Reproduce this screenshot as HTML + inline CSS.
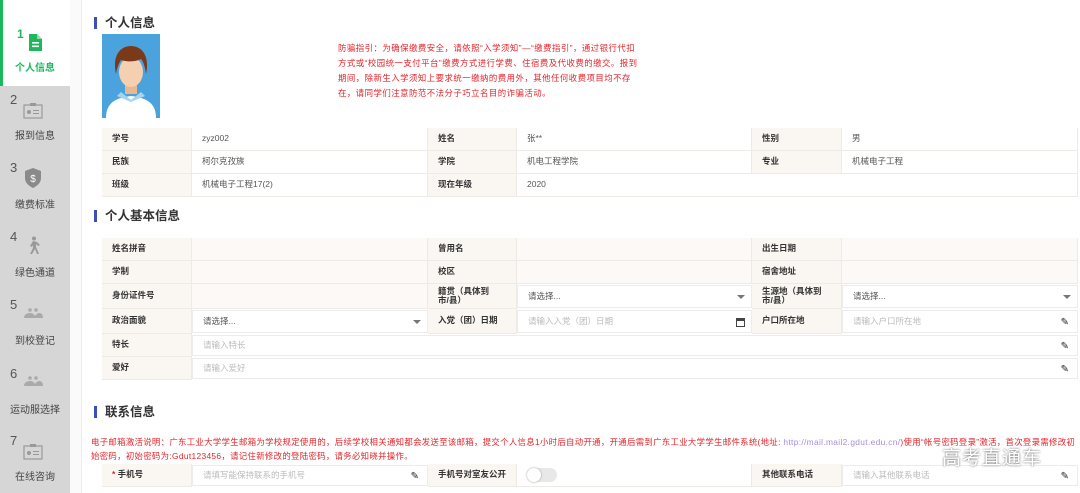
<!DOCTYPE html>
<html><head><meta charset="utf-8">
<style>
*{margin:0;padding:0;box-sizing:border-box}
body{width:1080px;height:493px;overflow:hidden;background:#fff;position:relative;font-family:"Liberation Sans","Noto Sans CJK SC",sans-serif;color:#333}
.a{position:absolute}
.side{left:0;top:0;width:70px;height:493px;background:#d6d6d6}
.act{left:0;top:0;width:70px;height:86px;background:#fff;border-left:3px solid #1db85c}
.num{font-size:13px;color:#555}
.sl{font-size:10px;color:#444;width:70px;text-align:center}
.h{font-size:12.5px;font-weight:bold;color:#333;padding-left:8px;border-left:3px solid #3b4fb5;line-height:12px}
.c{position:absolute;font-size:8.5px;line-height:1.1;display:flex;align-items:center;padding-left:10px;border-bottom:1px solid #eeeae5;border-right:1px solid #eeeae5}
.l{background:#faf6f2;color:#333;font-weight:bold}
.w{padding-right:18px}
.v{background:#fff;color:#555}
.e{background:#fcf9f6}
.in{background:#fff;color:#bbb;border:1px solid #ececec}
.sel{color:#555}
.ar{position:absolute;right:6px;top:50%;margin-top:-2px;width:0;height:0;border-left:4px solid transparent;border-right:4px solid transparent;border-top:4px solid #777}
.pen{position:absolute;right:8px;top:50%;margin-top:-5px;font-size:10px;color:#222}
.red{color:#e5242b}
</style></head><body>
<div class="a side"></div>
<div class="a act"></div>
<div class="a" style="left:70px;top:0;width:12px;height:493px;background:#fafafa;border-right:1px solid #eee"></div>
<div class="a num" style="left:17px;top:27px;color:#1db85c;font-weight:bold;font-size:12px">1</div>
<svg class="a" style="left:28px;top:34px" width="14" height="17" viewBox="0 0 14 17"><path d="M1 0h8l5 5v12H1z" fill="#1db85c"/><path d="M9 0v5h5" fill="#8fdcae"/><rect x="4" y="8" width="7" height="1.6" fill="#fff"/><rect x="4" y="11.5" width="7" height="1.6" fill="#fff"/></svg>
<div class="a sl" style="top:59px;color:#1db85c;font-weight:bold">个人信息</div>

<div class="a num" style="left:10px;top:92px">2</div>
<svg class="a" style="left:23px;top:102px" width="20" height="17" viewBox="0 0 20 17"><rect x="1" y="3" width="18" height="13" fill="none" stroke="#999" stroke-width="1.2"/><rect x="7" y="1" width="6" height="3" fill="#999"/><circle cx="6" cy="10" r="2" fill="#999"/><rect x="10" y="8" width="6" height="1" fill="#999"/><rect x="10" y="11" width="6" height="1" fill="#999"/></svg>
<div class="a sl" style="top:127px">报到信息</div>

<div class="a num" style="left:10px;top:160px">3</div>
<svg class="a" style="left:24px;top:168px" width="18" height="20" viewBox="0 0 18 20"><path d="M9 0L17 3v7c0 5-4 8-8 10C5 18 1 15 1 10V3z" fill="#8a8a8a"/><text x="9" y="14" font-size="10" fill="#fff" text-anchor="middle" font-family="Liberation Sans">$</text></svg>
<div class="a sl" style="top:196px">缴费标准</div>

<div class="a num" style="left:10px;top:229px">4</div>
<svg class="a" style="left:26px;top:236px" width="14" height="18" viewBox="0 0 14 18"><circle cx="8" cy="2.5" r="2" fill="#999"/><path d="M7 5l-3 5 2 1 1-2v3l-3 6h2l3-5 2 5h2l-3-7V8l2 2 2-1-3-3z" fill="#999"/></svg>
<div class="a sl" style="top:264px">绿色通道</div>

<div class="a num" style="left:10px;top:297px">5</div>
<svg class="a" style="left:23px;top:308px" width="20" height="10" viewBox="0 0 20 10"><circle cx="7" cy="2" r="1.8" fill="#aaa"/><circle cx="13" cy="2" r="1.8" fill="#aaa"/><path d="M1 10c0-4 4-5 6-5s4 1 5 3c1-2 3-3 4-3 2 0 4 1 4 5z" fill="#aaa"/></svg>
<div class="a sl" style="top:332px">到校登记</div>

<div class="a num" style="left:10px;top:366px">6</div>
<svg class="a" style="left:23px;top:376px" width="20" height="10" viewBox="0 0 20 10"><circle cx="7" cy="2" r="1.8" fill="#aaa"/><circle cx="13" cy="2" r="1.8" fill="#aaa"/><path d="M1 10c0-4 4-5 6-5s4 1 5 3c1-2 3-3 4-3 2 0 4 1 4 5z" fill="#aaa"/></svg>
<div class="a sl" style="top:401px">运动服选择</div>

<div class="a num" style="left:10px;top:433px">7</div>
<svg class="a" style="left:23px;top:443px" width="20" height="17" viewBox="0 0 20 17"><rect x="1" y="3" width="18" height="13" fill="none" stroke="#999" stroke-width="1.2"/><rect x="7" y="1" width="6" height="3" fill="#999"/><circle cx="6" cy="10" r="2" fill="#999"/><rect x="10" y="8" width="6" height="1" fill="#999"/><rect x="10" y="11" width="6" height="1" fill="#999"/></svg>
<div class="a sl" style="top:468px">在线咨询</div>

<div class="a h" style="left:94px;top:17px">个人信息</div>
<svg class="a" style="left:102px;top:34px" width="58" height="84" viewBox="0 0 58 84"><rect width="58" height="84" fill="#4aa3dd"/><path d="M4 84c0-14 8-20 25-22 17 2 25 8 25 22z" fill="#fff"/><path d="M19 58l10 8 10-8 4 4-14 6-14-6z" fill="#a8d3ef"/><rect x="23" y="46" width="12" height="14" fill="#e8b890"/><ellipse cx="29" cy="38" rx="12" ry="15" fill="#f5d0b0"/><path d="M14 40c-4-18 4-28 15-28s19 10 15 28c-1-8-3-13-5-15-6 3-14 3-20 1-2 3-4 8-5 14z" fill="#7a3a1a"/></svg>
<div class="a red" style="left:338px;top:41px;width:302px;font-size:8.4px;line-height:15px;letter-spacing:0.5px">防骗指引：为确保缴费安全，请依照“入学须知”—“缴费指引”，通过银行代扣方式或“校园统一支付平台”缴费方式进行学费、住宿费及代收费的缴交。报到期间，除新生入学须知上要求统一缴纳的费用外，其他任何收费项目均不存在，请同学们注意防范不法分子巧立名目的诈骗活动。</div>

<div class="a" style="left:102px;top:128px;width:976px;height:1px;background:#eeeae5"></div>
<div class="c l" style="left:102px;top:128px;width:90px;height:23px">学号</div>
<div class="c v" style="left:192px;top:128px;width:236px;height:23px">zyz002</div>
<div class="c l" style="left:428px;top:128px;width:89px;height:23px">姓名</div>
<div class="c v" style="left:517px;top:128px;width:235px;height:23px">张**</div>
<div class="c l" style="left:752px;top:128px;width:90px;height:23px">性别</div>
<div class="c v" style="left:842px;top:128px;width:236px;height:23px">男</div>
<div class="c l" style="left:102px;top:151px;width:90px;height:23px">民族</div>
<div class="c v" style="left:192px;top:151px;width:236px;height:23px">柯尔克孜族</div>
<div class="c l" style="left:428px;top:151px;width:89px;height:23px">学院</div>
<div class="c v" style="left:517px;top:151px;width:235px;height:23px">机电工程学院</div>
<div class="c l" style="left:752px;top:151px;width:90px;height:23px">专业</div>
<div class="c v" style="left:842px;top:151px;width:236px;height:23px">机械电子工程</div>
<div class="c l" style="left:102px;top:174px;width:90px;height:23px">班级</div>
<div class="c v" style="left:192px;top:174px;width:236px;height:23px">机械电子工程17(2)</div>
<div class="c l" style="left:428px;top:174px;width:89px;height:23px">现在年级</div>
<div class="c v" style="left:517px;top:174px;width:561px;height:23px">2020</div>

<div class="a h" style="left:94px;top:210px">个人基本信息</div>

<div class="c l" style="left:102px;top:238px;width:90px;height:23px">姓名拼音</div>
<div class="c e" style="left:192px;top:238px;width:236px;height:23px"></div>
<div class="c l" style="left:428px;top:238px;width:89px;height:23px">曾用名</div>
<div class="c e" style="left:517px;top:238px;width:235px;height:23px"></div>
<div class="c l" style="left:752px;top:238px;width:90px;height:23px">出生日期</div>
<div class="c e" style="left:842px;top:238px;width:236px;height:23px"></div>
<div class="c l" style="left:102px;top:261px;width:90px;height:23px">学制</div>
<div class="c e" style="left:192px;top:261px;width:236px;height:23px"></div>
<div class="c l" style="left:428px;top:261px;width:89px;height:23px">校区</div>
<div class="c e" style="left:517px;top:261px;width:235px;height:23px"></div>
<div class="c l" style="left:752px;top:261px;width:90px;height:23px">宿舍地址</div>
<div class="c e" style="left:842px;top:261px;width:236px;height:23px"></div>
<div class="c l" style="left:102px;top:284px;width:90px;height:25px">身份证件号</div>
<div class="c e" style="left:192px;top:284px;width:236px;height:25px"></div>
<div class="c l w" style="left:428px;top:284px;width:89px;height:25px">籍贯（具体到市/县）</div>
<div class="c in sel" style="left:517px;top:285px;width:235px;height:23px">请选择...<span class="ar"></span></div>
<div class="c l w" style="left:752px;top:284px;width:90px;height:25px">生源地（具体到市/县）</div>
<div class="c in sel" style="left:842px;top:285px;width:236px;height:23px">请选择...<span class="ar"></span></div>
<div class="c l" style="left:102px;top:309px;width:90px;height:25px">政治面貌</div>
<div class="c in sel" style="left:192px;top:310px;width:236px;height:23px">请选择...<span class="ar"></span></div>
<div class="c l" style="left:428px;top:309px;width:89px;height:25px">入党（团）日期</div>
<div class="c in" style="left:517px;top:310px;width:235px;height:23px">请输入入党（团）日期<span style="position:absolute;right:6px;top:7px;width:9px;height:9px;border:1px solid #444;border-top-width:3px"></span></div>
<div class="c l" style="left:752px;top:309px;width:90px;height:25px">户口所在地</div>
<div class="c in" style="left:842px;top:310px;width:236px;height:23px">请输入户口所在地<span class="pen">✎</span></div>
<div class="c l" style="left:102px;top:334px;width:90px;height:23px">特长</div>
<div class="c in" style="left:192px;top:335px;width:886px;height:21px">请输入特长<span class="pen">✎</span></div>
<div class="c l" style="left:102px;top:357px;width:90px;height:23px">爱好</div>
<div class="c in" style="left:192px;top:358px;width:886px;height:21px">请输入爱好<span class="pen">✎</span></div>

<div class="a h" style="left:94px;top:406px">联系信息</div>
<div class="a red" style="left:91px;top:435px;width:995px;font-size:8.4px;line-height:14px;white-space:nowrap;letter-spacing:0.33px">电子邮箱激活说明：广东工业大学学生邮箱为学校规定使用的，后续学校相关通知都会发送至该邮箱，提交个人信息1小时后自动开通，开通后需到广东工业大学学生邮件系统(地址: <span style="color:#a98bd8">http://mail.mail2.gdut.edu.cn/</span>)使用“帐号密码登录”激活，首次登录需修改初<br>始密码，初始密码为:Gdut123456，请记住新修改的登陆密码，请务必知晓并操作。</div>

<div class="c l" style="left:102px;top:464px;width:90px;height:23px"><span class="red">*</span>&nbsp;手机号</div>
<div class="c in" style="left:192px;top:465px;width:236px;height:21px">请填写能保持联系的手机号<span class="pen">✎</span></div>
<div class="c l" style="left:428px;top:464px;width:89px;height:23px">手机号对室友公开</div>
<div class="c v" style="left:517px;top:464px;width:235px;height:23px"><span style="width:30px;height:14px;border-radius:7px;background:#e8e8e8;display:block;position:relative"><span style="position:absolute;left:0;top:0;width:14px;height:14px;border-radius:7px;background:#fff;box-shadow:0 0 2px #999"></span></span></div>
<div class="c l" style="left:752px;top:464px;width:90px;height:23px">其他联系电话</div>
<div class="c in" style="left:842px;top:465px;width:236px;height:21px">请输入其他联系电话<span class="pen">✎</span></div>
<div class="a" style="left:942px;top:443px;font-size:19px;color:#fff;text-shadow:0 0 2px #555;letter-spacing:1px">高考直通车</div>
</body></html>
